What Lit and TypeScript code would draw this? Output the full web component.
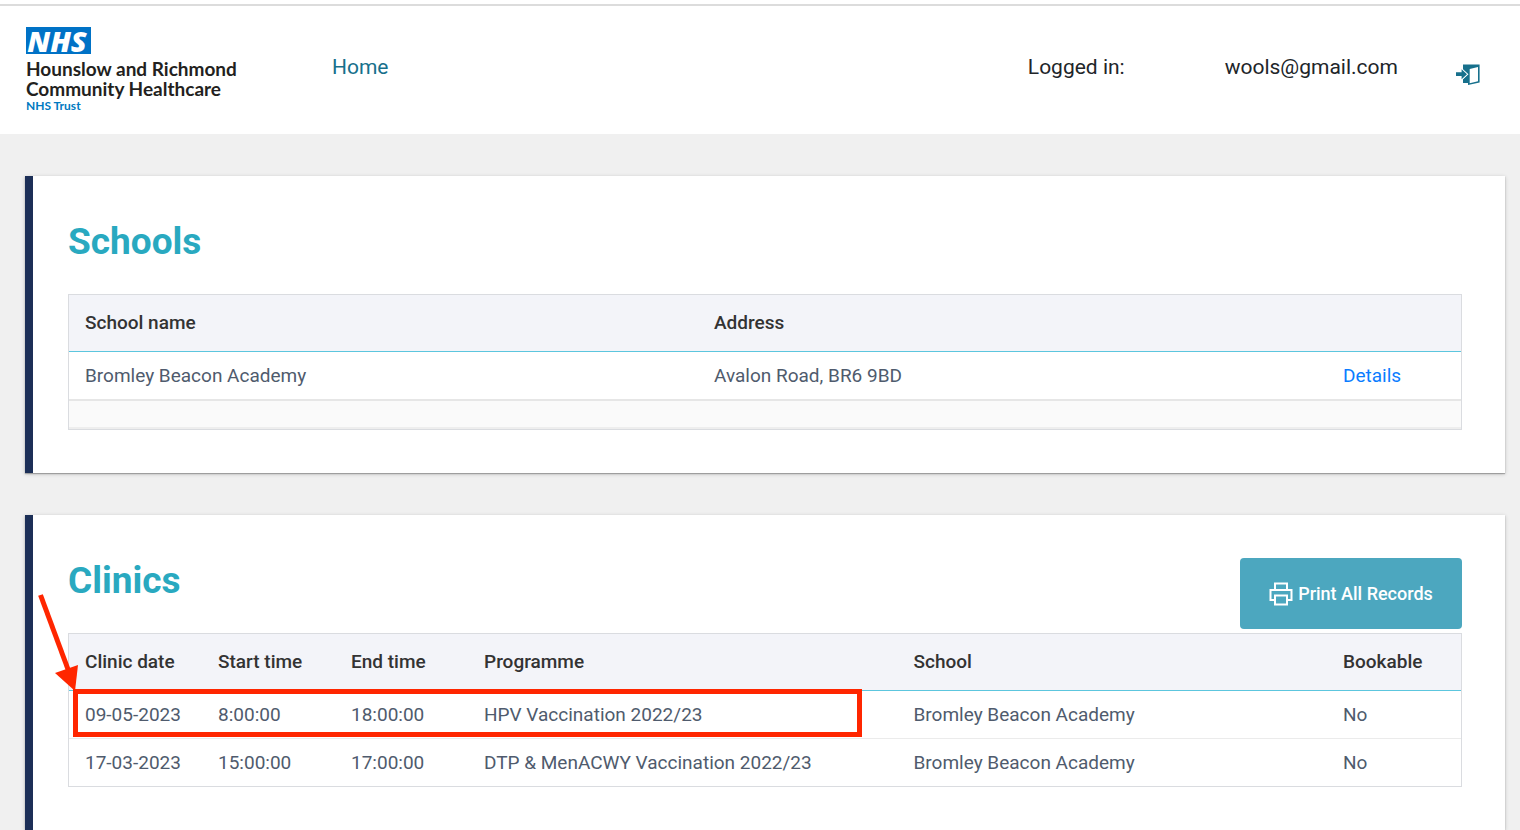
import { LitElement, html, css } from "lit";
import { customElement } from "lit/decorators.js";

interface Clinic {
  date: string;
  start: string;
  end: string;
  programme: string;
  school: string;
  bookable: string;
}

const clinics: Clinic[] = [
  { date: "09-05-2023", start: "8:00:00", end: "18:00:00", programme: "HPV Vaccination 2022/23", school: "Bromley Beacon Academy", bookable: "No" },
  { date: "17-03-2023", start: "15:00:00", end: "17:00:00", programme: "DTP & MenACWY Vaccination 2022/23", school: "Bromley Beacon Academy", bookable: "No" },
];

const schools = [{ name: "Bromley Beacon Academy", address: "Avalon Road, BR6 9BD" }];

@customElement("site-header")
export class SiteHeader extends LitElement {
  static styles = css`
    :host {
      display: block;
      background: #fff;
      font-family: Roboto, sans-serif;
      color: #212529;
    }
    .bar {
      display: flex;
      align-items: flex-start;
      box-sizing: border-box;
      border-top: 2px solid #dcdcdc;
      margin-top: 4px;
      padding: 21px 40px 0 26px;
      height: 130px;
      font-size: 21px;
      line-height: 28px;
    }
    .logo {
      display: block;
      width: 306px;
      flex: none;
      font-family: Lato, sans-serif;
      text-decoration: none;
      color: #231f20;
    }
    .nhs {
      display: flex;
      align-items: center;
      justify-content: center;
      box-sizing: border-box;
      width: 65px;
      height: 27px;
      padding-right: 3px;
      background: #0072c6;
      color: #fff;
      font-family: "Open Sans", sans-serif;
      font-size: 29px;
      font-weight: 800;
      font-style: italic;
      line-height: 26px;
    }
    .trust {
      display: block;
      margin-top: 5px;
      font-size: 19px;
      font-weight: 700;
      line-height: 20px;
    }
    .kind {
      display: block;
      font-size: 12px;
      font-weight: 700;
      line-height: 14px;
      color: #0079c1;
    }
    nav {
      flex: 1;
      padding-top: 26px;
    }
    .home {
      color: #17708c;
      text-decoration: none;
    }
    .user {
      display: flex;
      gap: 100px;
      padding-top: 26px;
    }
    .exit {
      display: block;
      margin: 37px 0 0 58px;
      padding: 0;
      border: 0;
      background: none;
      cursor: pointer;
    }
    .exit svg {
      display: block;
    }
  `;

  render() {
    return html`
      <header class="bar">
        <a class="logo" href="#">
          <span class="nhs">NHS</span>
          <span class="trust">Hounslow and Richmond<br />Community Healthcare</span>
          <span class="kind">NHS Trust</span>
        </a>
        <nav><a class="home" href="#">Home</a></nav>
        <div class="user"><span>Logged in:</span><span>wools@gmail.com</span></div>
        <button class="exit" type="button" aria-label="Log out">
          <svg width="24" height="22" viewBox="0 0 24 22">
            <path fill="#17708c" d="M7 .5H23.600V18.500L12 21V19H7V15L11.500 10.500 7 6Z" />
            <path fill="#fff" d="M13.700 5 22 3V17.200L13.700 19.300Z" />
            <path fill="#17708c" stroke="#fff" stroke-width="2" paint-order="stroke" d="M0 8.300H5.600V5.200L11 10.200 5.600 15.200V12.100H0Z" />
          </svg>
        </button>
      </header>
    `;
  }
}

@customElement("app-root")
export class AppRoot extends LitElement {
  static styles = css`
    :host {
      display: flex;
      flex-direction: column;
      min-height: 100vh;
      background: #f0f0f0;
      font-family: Roboto, sans-serif;
    }
    .top {
      background: #fff;
      display: flow-root;
    }
    main {
      flex: 1;
      display: flex;
      flex-direction: column;
      gap: 42px;
      padding: 42px 15px 0 25px;
    }
    .card {
      background: #fff;
      border-left: 8px solid #1c2f57;
      padding: 42px 43px 43px 35px;
      box-shadow: 0 1px 1px rgba(0, 0, 0, 0.25), 0 1px 4px rgba(0, 0, 0, 0.2);
    }
    .card:last-child {
      flex: 1;
    }
    .head {
      display: flex;
      justify-content: space-between;
      align-items: flex-start;
      height: 76px;
    }
    h2 {
      margin: 0;
      font-size: 37px;
      line-height: 48px;
      font-weight: 700;
      color: #29a9c0;
    }
    .print {
      display: flex;
      align-items: center;
      justify-content: center;
      gap: 5px;
      width: 222px;
      height: 71px;
      margin-top: 1px;
      padding: 0;
      border: 0;
      border-radius: 4px;
      background: #4ca7bf;
      color: #fff;
      font: 500 18px/24px Roboto, sans-serif;
      cursor: pointer;
    }
    .frame {
      position: relative;
      border: 1px solid #dadce0;
    }
    table {
      width: 100%;
      table-layout: fixed;
      border-collapse: separate;
      border-spacing: 0;
      font-size: 19px;
      line-height: 24px;
      color: #4f5b6d;
    }
    th,
    td {
      box-sizing: border-box;
      padding: 0 16px;
      text-align: left;
      white-space: nowrap;
    }
    th {
      height: 57px;
      background: #f3f4f9;
      border-bottom: 1px solid #5cc6de;
      color: #333;
      font-weight: 500;
    }
    td {
      height: 47px;
    }
    .clinics tr:not(:last-child) td {
      height: 48px;
      border-bottom: 1px solid #ebebeb;
    }
    .time {
      width: 133px;
    }
    .last {
      width: 134px;
    }
    .details {
      color: #0a7cff;
      text-decoration: none;
    }
    .pager {
      height: 26px;
      border-top: 2px solid #e6e6e6;
      border-bottom: 2px solid #eee;
      background: #fafafa;
    }
    .highlight {
      position: absolute;
      left: 4px;
      top: 55px;
      width: 789px;
      height: 48px;
      box-sizing: border-box;
      border: 5px solid #ff2600;
      pointer-events: none;
    }
    .arrow {
      position: absolute;
      left: -33px;
      top: -42px;
      pointer-events: none;
    }
  `;

  render() {
    return html`
      <div class="top"><site-header></site-header></div>
      <main>
        <section class="card">
          <div class="head"><h2>Schools</h2></div>
          <div class="frame">
            <table>
              <thead>
                <tr>
                  <th>School name</th>
                  <th>Address</th>
                  <th class="last"></th>
                </tr>
              </thead>
              <tbody>
                ${schools.map(
                  (s) => html`<tr>
                    <td>${s.name}</td>
                    <td>${s.address}</td>
                    <td><a class="details" href="#">Details</a></td>
                  </tr>`
                )}
              </tbody>
            </table>
            <div class="pager"></div>
          </div>
        </section>
        <section class="card">
          <div class="head">
            <h2>Clinics</h2>
            <button class="print" type="button">
              <svg width="24" height="24" viewBox="0 0 24 24" fill="none" stroke="#fff" stroke-width="2">
                <path d="M6 7V1.500H18V7M6 18H1.500V8H22.500V18H18M6 13.500H18V22.500H6Z" />
              </svg>
              Print All Records
            </button>
          </div>
          <div class="frame">
            <table class="clinics">
              <thead>
                <tr>
                  <th class="time">Clinic date</th>
                  <th class="time">Start time</th>
                  <th class="time">End time</th>
                  <th>Programme</th>
                  <th>School</th>
                  <th class="last">Bookable</th>
                </tr>
              </thead>
              <tbody>
                ${clinics.map(
                  (c) => html`<tr>
                    <td>${c.date}</td>
                    <td>${c.start}</td>
                    <td>${c.end}</td>
                    <td>${c.programme}</td>
                    <td>${c.school}</td>
                    <td>${c.bookable}</td>
                  </tr>`
                )}
              </tbody>
            </table>
            <div class="highlight"></div>
            <svg class="arrow" width="50" height="104" viewBox="0 0 50 104">
              <path d="M4.500 3 33 80" stroke="#ff2600" stroke-width="5" />
              <path d="M19 81 42 73 39 99Z" fill="#ff2600" />
            </svg>
          </div>
        </section>
      </main>
    `;
  }
}
